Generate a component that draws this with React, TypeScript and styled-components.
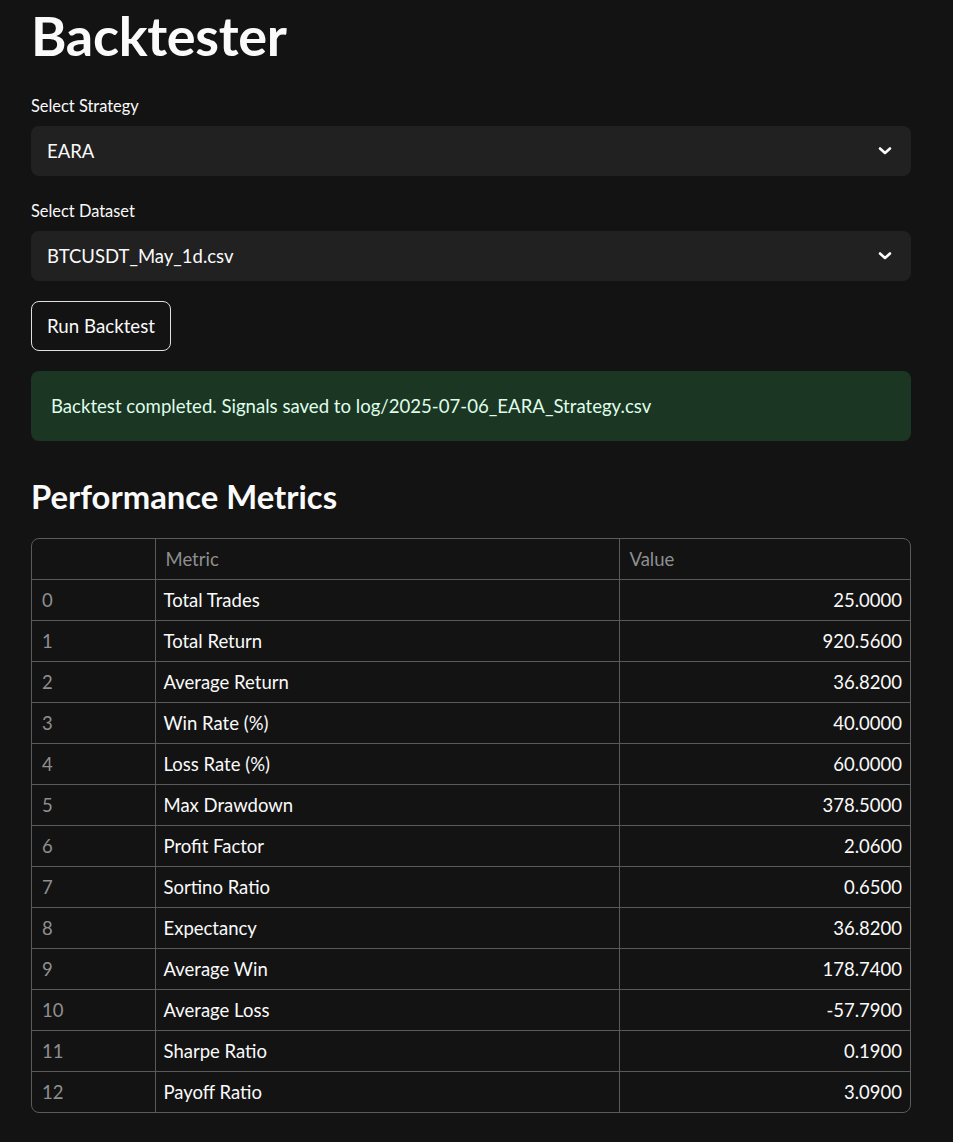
import React from "react";
import styled, { createGlobalStyle } from "styled-components";

const Global = createGlobalStyle`
  html, body { margin: 0; padding: 0; background: #131313; }
  body { font-family: "Lato", "Noto Sans", sans-serif; color: #fafafa; }
  * { box-sizing: border-box; }
`;

const Page = styled.main`
  width: 953px;
  min-height: 1142px;
  padding: 0 42px 0 31px;
  display: flex;
  flex-direction: column;
`;

const Title = styled.h1`
  margin: 0;
  height: 96px;
  padding-top: 4px;
  font-size: 54px;
  line-height: 64px;
  font-weight: 700;
  letter-spacing: -0.3px;
`;

const Field = styled.div`
  display: flex;
  flex-direction: column;
  margin-bottom: 25px;
`;

const Label = styled.label`
  font-size: 16.4px;
  line-height: 20px;
  height: 30px;
  color: #fafafa;
`;

const Select = styled.div`
  height: 50px;
  background: #212121;
  border-radius: 8px;
  display: flex;
  align-items: center;
  justify-content: space-between;
  padding: 0 19px 0 16px;
  font-size: 18.5px;
`;

const Chevron = () => (
  <svg width="14" height="10" viewBox="0 0 14 10">
    <polyline points="2,2.5 7,7 12,2.5" fill="none" stroke="#fafafa" strokeWidth="2.6" strokeLinecap="round" strokeLinejoin="round" />
  </svg>
);

const Button = styled.button`
  align-self: flex-start;
  height: 50px;
  width: 140px;
  padding: 0;
  margin: -5px 0 20px;
  background: #131313;
  color: #fafafa;
  border: 1px solid #e0e0e0;
  border-radius: 8px;
  font-family: inherit;
  font-size: 18.7px;
`;

const Alert = styled.div`
  height: 70px;
  background: #1c3624;
  color: #dffde9;
  border-radius: 8px;
  padding: 0 20px;
  display: flex;
  align-items: center;
  font-size: 18.6px;
`;

const Heading = styled.h2`
  margin: 0;
  padding-top: 36px;
  height: 97px;
  font-size: 32.8px;
  line-height: 40px;
  font-weight: 700;
`;

const TableWrap = styled.div`
  border: 1px solid #5a5a5a;
  border-radius: 8px;
  overflow: hidden;
  width: 880px;
`;

const Table = styled.table`
  width: 100%;
  border-collapse: collapse;
  table-layout: fixed;
  font-size: 18.5px;
`;

const Cell = styled.td<{ $muted?: boolean; $right?: boolean; $pad?: number }>`
  height: 41px;
  padding: 0 ${(p) => (p.$right ? 8 : 0)}px 0 ${(p) => p.$pad ?? 8}px;
  border-right: 1px solid #5a5a5a;
  border-bottom: 1px solid #5a5a5a;
  color: ${(p) => (p.$muted ? "#8f8f8f" : "#fafafa")};
  text-align: ${(p) => (p.$right ? "right" : "left")};
  font-weight: 400;
  white-space: nowrap;
  &:last-child { border-right: none; }
  tbody tr:last-child > & { border-bottom: none; }
`;

const HeadCell = styled(Cell).attrs({ as: "th" })`
  height: 40px;
`;

const rows: [string, string][] = [
  ["Total Trades", "25.0000"],
  ["Total Return", "920.5600"],
  ["Average Return", "36.8200"],
  ["Win Rate (%)", "40.0000"],
  ["Loss Rate (%)", "60.0000"],
  ["Max Drawdown", "378.5000"],
  ["Profit Factor", "2.0600"],
  ["Sortino Ratio", "0.6500"],
  ["Expectancy", "36.8200"],
  ["Average Win", "178.7400"],
  ["Average Loss", "-57.7900"],
  ["Sharpe Ratio", "0.1900"],
  ["Payoff Ratio", "3.0900"],
];

export default function App() {
  return (
    <>
      <Global />
      <Page>
        <Title>Backtester</Title>
        <Field>
          <Label>Select Strategy</Label>
          <Select>
            <span>EARA</span>
            <Chevron />
          </Select>
        </Field>
        <Field>
          <Label>Select Dataset</Label>
          <Select>
            <span>BTCUSDT_May_1d.csv</span>
            <Chevron />
          </Select>
        </Field>
        <Button>Run Backtest</Button>
        <Alert>Backtest completed. Signals saved to log/2025-07-06_EARA_Strategy.csv</Alert>
        <Heading>Performance Metrics</Heading>
        <TableWrap>
          <Table>
            <colgroup>
              <col style={{ width: 123 }} />
              <col style={{ width: 464 }} />
              <col />
            </colgroup>
            <thead>
              <tr>
                <HeadCell $muted $pad={10}></HeadCell>
                <HeadCell $muted $pad={10}>Metric</HeadCell>
                <HeadCell $muted $pad={10}>Value</HeadCell>
              </tr>
            </thead>
            <tbody>
              {rows.map(([m, v], i) => (
                <tr key={m}>
                  <Cell $muted $pad={10}>{i}</Cell>
                  <Cell>{m}</Cell>
                  <Cell $right>{v}</Cell>
                </tr>
              ))}
            </tbody>
          </Table>
        </TableWrap>
      </Page>
    </>
  );
}
